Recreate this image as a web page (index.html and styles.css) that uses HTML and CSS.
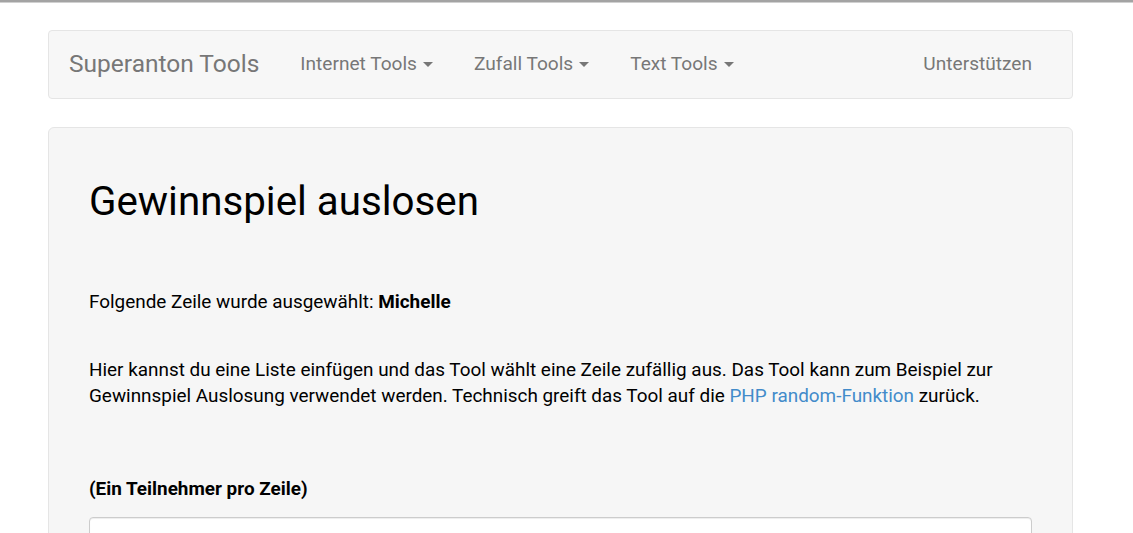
FILE: index.html
```html
<!DOCTYPE html>
<html lang="de">
<head>
<meta charset="utf-8">
<title>Gewinnspiel auslosen</title>
<link rel="stylesheet" href="styles.css">
</head>
<body>
<div class="topline"></div>
<div class="page">
  <nav class="navbar">
    <a class="brand" href="#">Superanton Tools</a>
    <ul class="nav">
      <li><a href="#">Internet Tools <span class="caret"></span></a></li>
      <li><a href="#">Zufall Tools <span class="caret"></span></a></li>
      <li><a href="#">Text Tools <span class="caret"></span></a></li>
    </ul>
    <ul class="nav nav-right">
      <li><a href="#">Unterstützen</a></li>
    </ul>
  </nav>
  <main class="jumbotron">
    <h1>Gewinnspiel auslosen</h1>
    <p class="result">Folgende Zeile wurde ausgewählt: <strong>Michelle</strong></p>
    <p class="desc">Hier kannst du eine Liste einfügen und das Tool wählt eine Zeile zufällig aus. Das Tool kann zum Beispiel zur Gewinnspiel Auslosung verwendet werden. Technisch greift das Tool auf die <a href="#">PHP random-Funktion</a> zurück.</p>
    <form class="form">
      <label for="list">(Ein Teilnehmer pro Zeile)</label>
      <textarea id="list" rows="10"></textarea>
    </form>
  </main>
</div>
</body>
</html>
```

FILE: styles.css
```css
* { box-sizing: border-box; }
html, body { margin: 0; padding: 0; }
body {
  background: #fff;
  font-family: Roboto, "Liberation Sans", Arial, sans-serif;
  color: #000;
  overflow: hidden;
}
.topline {
  height: 3px;
  background: #a3a3a3;
  border-bottom: 1px solid #d0d0d0;
}
.page {
  width: 1025px;
  margin-left: 48px;
  padding-top: 27px;
}
.navbar {
  display: flex;
  align-items: center;
  height: 69px;
  background: #f7f7f7;
  border: 1px solid #e5e5e5;
  border-radius: 4px;
  padding: 0 40px 0 20px;
}
.brand {
  font-size: 24.5px;
  color: #777;
  text-decoration: none;
  margin-right: 41px;
  position: relative;
  top: -1px;
}
.nav {
  list-style: none;
  margin: 0;
  padding: 0;
  display: flex;
  gap: 41px;
}
.nav a {
  font-size: 19.1px;
  color: #777;
  text-decoration: none;
  display: flex;
  align-items: center;
  position: relative;
  top: -1px;
}
.caret {
  display: inline-block;
  width: 0;
  height: 0;
  margin-left: 6px;
  border-top: 5px solid #777;
  border-left: 5px solid transparent;
  border-right: 5px solid transparent;
  position: relative;
  top: 1px;
}
.nav-right { margin-left: auto; }
.jumbotron {
  margin-top: 28px;
  background: #f6f6f6;
  border: 1px solid #e5e5e5;
  border-radius: 6px;
  padding: 52px 40px 40px;
  min-height: 500px;
}
h1 {
  font-size: 40.3px;
  font-weight: 400;
  margin: 0 0 65px;
  line-height: 44px;
}
p {
  font-size: 18.9px;
  line-height: 26px;
  margin: 0;
}
.result { margin-bottom: 42px; }
strong { font-weight: 700; }
.desc a { color: #428bca; text-decoration: none; }
.form { margin-top: 67px; display: flex; flex-direction: column; }
label {
  font-size: 18.9px;
  font-weight: 700;
  line-height: 26px;
  margin-bottom: 15px;
}
textarea {
  width: 100%;
  height: 200px;
  background: #fff;
  border: 1px solid #ccc;
  border-radius: 4px;
  box-shadow: inset 0 1px 1px rgba(0,0,0,.075);
  resize: none;
}
```
